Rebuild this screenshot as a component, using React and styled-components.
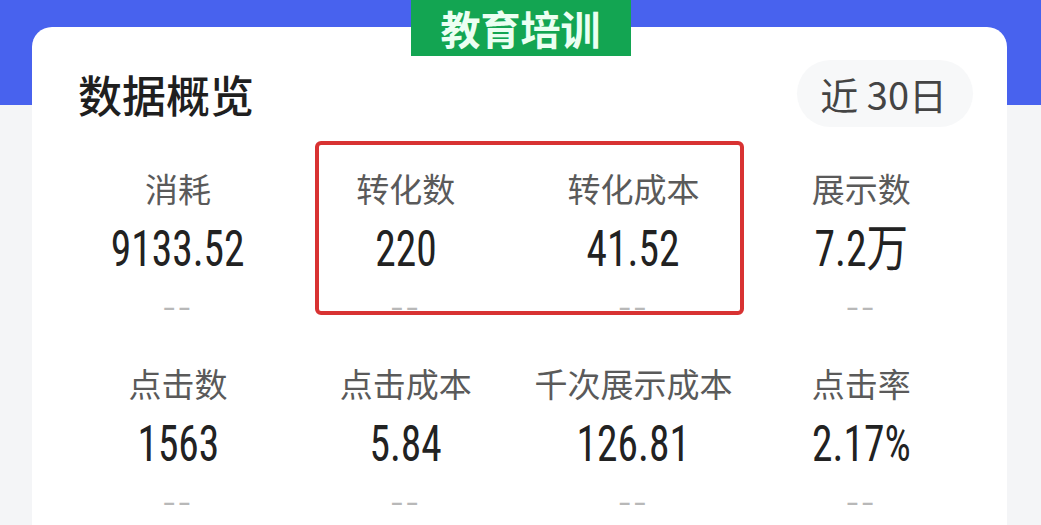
import styled, { createGlobalStyle } from "styled-components";

const metrics = [
  { label: "消耗", value: "9133.52" },
  { label: "转化数", value: "220" },
  { label: "转化成本", value: "41.52" },
  { label: "展示数", value: "7.2万" },
  { label: "点击数", value: "1563" },
  { label: "点击成本", value: "5.84" },
  { label: "千次展示成本", value: "126.81" },
  { label: "点击率", value: "2.17%" },
];

const GlobalStyle = createGlobalStyle`
  * { box-sizing: border-box; }
  html, body { margin: 0; padding: 0; }
  body {
    background: #f4f5f7;
    font-family: "Noto Sans CJK SC", "Noto Sans", sans-serif;
    overflow: hidden;
  }
`;

const Page = styled.div`
  position: relative;
  height: 525px;
  overflow: hidden;
  padding: 27px 34px 0 32px;
  background: linear-gradient(to bottom, #4862ee 0, #4862ee 105px, #f4f5f7 105px);
`;

const Badge = styled.div`
  position: absolute;
  top: 0;
  left: 50%;
  transform: translateX(-50%);
  width: 220px;
  height: 56px;
  background: #13a552;
  color: #ebfff2;
  font-size: 40px;
  font-weight: 700;
  line-height: 56px;
  text-align: center;
  z-index: 2;
`;

const Card = styled.section`
  background: #fff;
  border-radius: 20px 20px 0 0;
  padding: 33px 32px 0;
  min-height: 600px;
`;

const Header = styled.div`
  display: flex;
  align-items: center;
  justify-content: space-between;
  height: 67px;
  padding-left: 14px;
`;

const Title = styled.h2`
  margin: 0;
  font-size: 44px;
  font-weight: 500;
  color: #1f1f1f;
  line-height: 1;
`;

const Pill = styled.div`
  height: 67px;
  padding: 0 26px 0 23px;
  margin-right: 2px;
  border-radius: 34px;
  background: #f7f8f9;
  color: #444;
  font-size: 38px;
  display: flex;
  align-items: center;
`;

const Grid = styled.div`
  position: relative;
  display: grid;
  grid-template-columns: repeat(4, 1fr);
  row-gap: 47px;
  margin-top: 41px;
`;

const Highlight = styled.div`
  position: absolute;
  left: 251px;
  top: -27px;
  width: 429px;
  height: 174px;
  border: 4px solid #d83232;
  border-radius: 6px;
  pointer-events: none;
`;

const Metric = styled.div`
  display: flex;
  flex-direction: column;
  align-items: center;
`;

const Label = styled.div`
  font-size: 33px;
  line-height: 40px;
  color: #5a5a5a;
  white-space: nowrap;
`;

const Value = styled.div`
  margin-top: 16px;
  font-family: "Roboto Condensed", "Liberation Sans Narrow", "DejaVu Sans Condensed", "Noto Sans CJK SC", sans-serif;
  font-size: 50px;
  line-height: 50px;
  color: #222;
  transform: scaleX(0.83);
  white-space: nowrap;
`;

const Dash = styled.div`
  margin-top: 22px;
  font-family: "Liberation Sans", sans-serif;
  font-size: 40px;
  line-height: 20px;
  letter-spacing: 2px;
  color: #b8b8b8;
  transform: scaleY(0.7);
`;

export default function App() {
  return (
    <>
      <GlobalStyle />
      <Page>
        <Badge>教育培训</Badge>
        <Card>
          <Header>
            <Title>数据概览</Title>
            <Pill>近 30日</Pill>
          </Header>
          <Grid>
            {metrics.map((m) => (
              <Metric key={m.label}>
                <Label>{m.label}</Label>
                <Value>{m.value}</Value>
                <Dash>--</Dash>
              </Metric>
            ))}
            <Highlight />
          </Grid>
        </Card>
      </Page>
    </>
  );
}
